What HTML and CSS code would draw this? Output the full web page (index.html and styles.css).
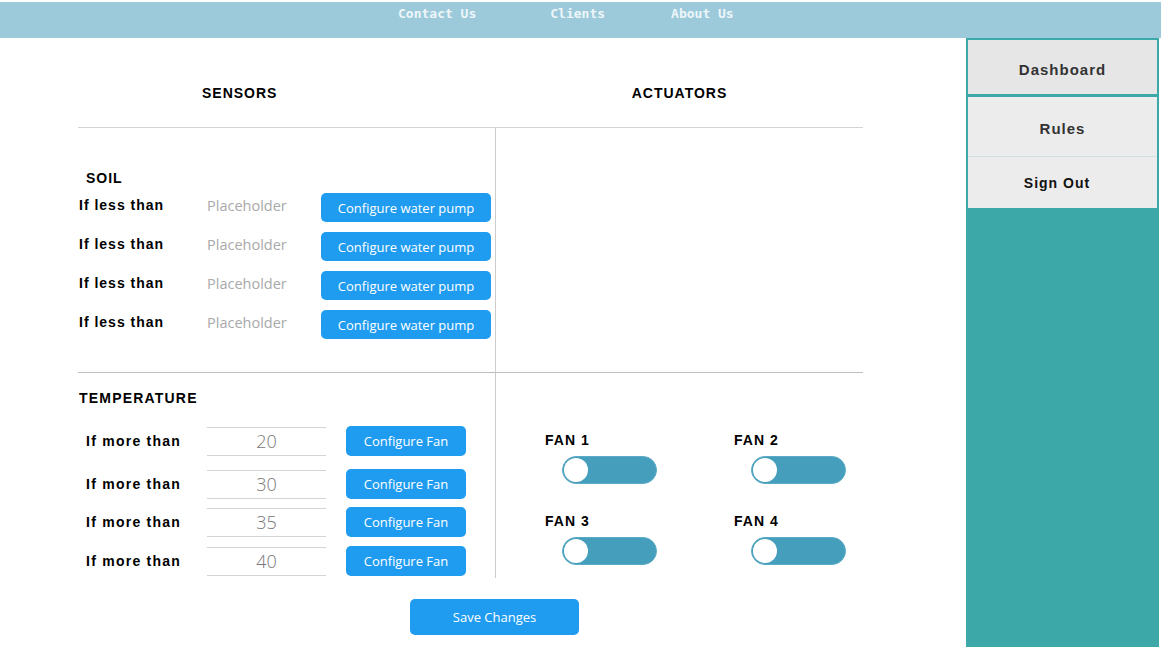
FILE: index.html
```html
<!DOCTYPE html>
<html lang="en">
<head>
<meta charset="utf-8">
<title>Dashboard</title>
<link rel="stylesheet" href="styles.css">
</head>
<body>
<header class="topnav">
  <a class="nav-link" href="#">Contact Us</a>
  <a class="nav-link nav-clients" href="#">Clients</a>
  <a class="nav-link nav-about" href="#">About Us</a>
</header>
<div class="layout">
  <main class="content">
    <div class="board">
      <div class="head-cell head-sensors">SENSORS</div>
      <div class="head-cell head-actuators">ACTUATORS</div>

      <section class="cell soil-left">
        <div class="section-title soil-title">SOIL</div>
        <div class="rule-list">
          <div class="rule-row soil-row">
            <span class="rule-label">If less than</span>
            <input class="ph-input" type="text" placeholder="Placeholder">
            <button class="btn btn-pump">Configure water pump</button>
          </div>
          <div class="rule-row soil-row">
            <span class="rule-label">If less than</span>
            <input class="ph-input" type="text" placeholder="Placeholder">
            <button class="btn btn-pump">Configure water pump</button>
          </div>
          <div class="rule-row soil-row">
            <span class="rule-label">If less than</span>
            <input class="ph-input" type="text" placeholder="Placeholder">
            <button class="btn btn-pump">Configure water pump</button>
          </div>
          <div class="rule-row soil-row">
            <span class="rule-label">If less than</span>
            <input class="ph-input" type="text" placeholder="Placeholder">
            <button class="btn btn-pump">Configure water pump</button>
          </div>
        </div>
      </section>
      <section class="cell soil-right"></section>

      <section class="cell temp-left">
        <div class="section-title temp-title">TEMPERATURE</div>
        <div class="temp-list">
          <div class="rule-row temp-row">
            <span class="rule-label temp-label">If more than</span>
            <input class="num-input" type="text" value="20">
            <button class="btn btn-fan">Configure Fan</button>
          </div>
          <div class="rule-row temp-row">
            <span class="rule-label temp-label">If more than</span>
            <input class="num-input" type="text" value="30">
            <button class="btn btn-fan">Configure Fan</button>
          </div>
          <div class="rule-row temp-row">
            <span class="rule-label temp-label">If more than</span>
            <input class="num-input" type="text" value="35">
            <button class="btn btn-fan">Configure Fan</button>
          </div>
          <div class="rule-row temp-row">
            <span class="rule-label temp-label">If more than</span>
            <input class="num-input" type="text" value="40">
            <button class="btn btn-fan">Configure Fan</button>
          </div>
        </div>
      </section>
      <section class="cell temp-right">
        <div class="fan-grid">
          <div class="fan"><span class="fan-label">FAN 1</span><span class="toggle"><span class="knob"></span></span></div>
          <div class="fan"><span class="fan-label">FAN 2</span><span class="toggle"><span class="knob"></span></span></div>
          <div class="fan"><span class="fan-label">FAN 3</span><span class="toggle"><span class="knob"></span></span></div>
          <div class="fan"><span class="fan-label">FAN 4</span><span class="toggle"><span class="knob"></span></span></div>
        </div>
      </section>
    </div>
    <div class="save-row">
      <button class="btn btn-save">Save Changes</button>
    </div>
  </main>
  <aside class="sidebar">
    <a class="side-item side-dash" href="#">Dashboard</a>
    <a class="side-item side-rules" href="#">Rules</a>
    <a class="side-item side-signout" href="#">Sign Out</a>
  </aside>
</div>
</body>
</html>
```

FILE: styles.css
```css
html, body {
  margin: 0;
  padding: 0;
}
body {
  width: 1161px;
  height: 647px;
  overflow: hidden;
  background: #ffffff;
  font-family: "Liberation Sans", Arial, sans-serif;
  color: #000;
}

/* top navigation */
.topnav {
  margin-top: 2px;
  height: 36px;
  box-sizing: border-box;
  background: #9ccadb;
  display: flex;
  align-items: flex-start;
  padding: 4px 0 0 398px;
}
.nav-link {
  font-family: "DejaVu Sans Mono", "Liberation Mono", monospace;
  font-size: 13px;
  font-weight: bold;
  line-height: 15px;
  color: #eef6f9;
  text-decoration: none;
}
.nav-clients { margin-left: 74px; }
.nav-about { margin-left: 66px; }

/* layout */
.layout {
  display: flex;
  height: 609px;
}
.content {
  flex: 1;
  padding-left: 78px;
}
.sidebar {
  width: 193px;
  margin-right: 2px;
  box-sizing: border-box;
  padding: 2px;
  background: #3ca8a8;
  display: flex;
  flex-direction: column;
}
.side-item {
  display: flex;
  align-items: center;
  justify-content: center;
  box-sizing: border-box;
  font-size: 15px;
  font-weight: bold;
  letter-spacing: 1px;
  color: #333;
  text-decoration: none;
}
.side-dash {
  height: 54px;
  padding-top: 4px;
  margin-bottom: 3px;
  background: #e6e6e6;
}
.side-rules {
  height: 60px;
  padding-top: 3px;
  background: #ececec;
  border-bottom: 1px solid #cde2e2;
}
.side-signout {
  height: 51px;
  padding-right: 11px;
  background: #ececec;
  font-size: 14px;
  color: #111;
}

/* board */
.board {
  display: grid;
  grid-template-columns: 418px 367px;
}
.head-cell {
  height: 90px;
  box-sizing: border-box;
  border-bottom: 1px solid #d3d3d3;
  padding-top: 47px;
  font-size: 14px;
  font-weight: bold;
  letter-spacing: 1px;
  line-height: 16px;
  color: #000;
}
.head-sensors { padding-left: 124px; }
.head-actuators { text-align: center; }

.cell { box-sizing: border-box; }
.soil-left {
  height: 245px;
  border-right: 1px solid #cccccc;
  border-bottom: 1px solid #bdbdbd;
  padding: 42px 0 0 1px;
}
.soil-right {
  height: 245px;
  border-bottom: 1px solid #bdbdbd;
}
.temp-left {
  height: 205px;
  border-right: 1px solid #cccccc;
  padding: 17px 0 0 1px;
}
.temp-right {
  height: 205px;
  padding: 59px 0 0 49px;
}

.section-title {
  font-size: 14px;
  font-weight: bold;
  letter-spacing: 1px;
  line-height: 16px;
  color: #000;
}
.soil-title { padding-left: 7px; margin-bottom: 7px; }
.temp-title { margin-bottom: 20px; letter-spacing: 1.2px; }

.rule-list {
  display: flex;
  flex-direction: column;
  gap: 10px;
}
.temp-list {
  display: flex;
  flex-direction: column;
}
.rule-row { display: flex; }
.soil-row {
  height: 29px;
  align-items: flex-start;
}
.temp-row {
  height: 30px;
  align-items: center;
}
.temp-row:nth-child(2) { margin-top: 13px; }
.temp-row:nth-child(3) { margin-top: 8px; }
.temp-row:nth-child(4) { margin-top: 9px; }

.rule-label {
  width: 128px;
  flex: none;
  font-size: 14px;
  font-weight: bold;
  letter-spacing: 1px;
  line-height: 24px;
  color: #000;
}
.temp-label {
  box-sizing: border-box;
  padding-left: 7px;
  letter-spacing: 1.25px;
  line-height: 30px;
}

.ph-input {
  width: 114px;
  flex: none;
  height: 24px;
  padding: 0;
  margin: 0;
  border: none;
  outline: none;
  background: transparent;
  font-family: "Open Sans", "Noto Sans", sans-serif;
  font-size: 14.5px;
  color: #888;
}
.ph-input::placeholder { color: #a9a9a9; }

.num-input {
  width: 119px;
  height: 29px;
  flex: none;
  box-sizing: border-box;
  padding: 0;
  margin: 0 20px 0 0;
  border: none;
  border-top: 1px solid #d4d4d4;
  border-bottom: 1px solid #d4d4d4;
  outline: none;
  background: transparent;
  text-align: center;
  font-family: "Open Sans", "Noto Sans", sans-serif;
  font-weight: 300;
  font-size: 18px;
  color: #777;
}

.btn {
  flex: none;
  border: none;
  border-radius: 5px;
  padding: 0;
  margin: 0;
  background: #1f9cf0;
  color: #ffffff;
  font-family: "Open Sans", "Noto Sans", sans-serif;
  font-size: 13px;
  cursor: pointer;
}
.btn-pump { width: 170px; height: 29px; }
.btn-fan { width: 120px; height: 30px; }

/* fans */
.fan-grid {
  display: grid;
  grid-template-columns: 189px 189px;
  row-gap: 29px;
}
.fan {
  display: flex;
  flex-direction: column;
  align-items: flex-start;
  gap: 8px;
}
.fan-label {
  font-size: 14px;
  font-weight: bold;
  letter-spacing: 1px;
  line-height: 16px;
  color: #000;
}
.toggle {
  position: relative;
  margin-left: 17px;
  width: 95px;
  height: 28px;
  box-sizing: border-box;
  border-radius: 14px;
  background: #469ebd;
  border: 1px solid #5cabc6;
}
.knob {
  position: absolute;
  left: 1px;
  top: 1px;
  width: 24px;
  height: 24px;
  border-radius: 50%;
  background: #ffffff;
}

/* save */
.save-row {
  padding: 21px 0 0 332px;
}
.btn-save {
  width: 169px;
  height: 36px;
}
```
